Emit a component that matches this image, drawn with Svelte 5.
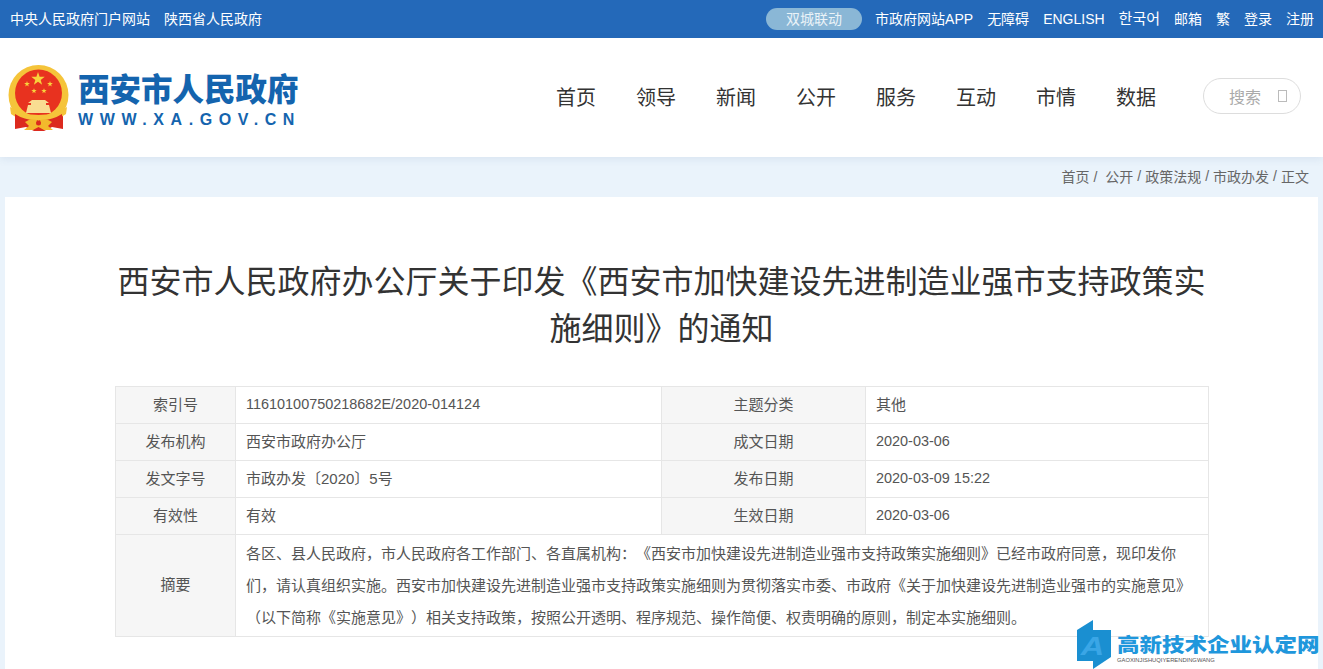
<script lang="ts">
  const topLeft = ['中央人民政府门户网站', '陕西省人民政府'];
  const topRight = ['市政府网站APP', '无障碍', 'ENGLISH', '한국어', '邮箱', '繁', '登录', '注册'];
  const nav = ['首页', '领导', '新闻', '公开', '服务', '互动', '市情', '数据'];
  const crumbs = ['公开', '政策法规', '市政办发', '正文'];

  const rows = [
    ['索引号', '11610100750218682E/2020-014124', '主题分类', '其他'],
    ['发布机构', '西安市政府办公厅', '成文日期', '2020-03-06'],
    ['发文字号', '市政办发〔2020〕5号', '发布日期', '2020-03-09 15:22'],
    ['有效性', '有效', '生效日期', '2020-03-06']
  ];

  const isNum = (s: string) => /^\d/.test(s);

  // five point star for the emblem
  function star(cx: number, cy: number, r: number) {
    const pts = [];
    for (let i = 0; i < 10; i++) {
      const len = i % 2 ? r * 0.4 : r;
      const a = (Math.PI / 5) * i - Math.PI / 2;
      pts.push(`${(cx + len * Math.cos(a)).toFixed(1)},${(cy + len * Math.sin(a)).toFixed(1)}`);
    }
    return pts.join(' ');
  }

  const stars = [
    [30, 14, 7],
    [19, 19, 3],
    [42, 19, 3],
    [26, 26, 2.8],
    [36, 26, 2.8]
  ];
</script>

<div class="page">
  <div class="topbar">
    <div class="top-links">
      {#each topLeft as item}
        <span>{item}</span>
      {/each}
    </div>
    <div class="top-links right">
      <span class="pill">双城联动</span>
      {#each topRight as item}
        <span class:ko={item === '한국어'}>{item}</span>
      {/each}
    </div>
  </div>

  <header class="header">
    <div class="logo">
      <svg class="emblem" viewBox="0 0 62 66" width="62" height="66" aria-hidden="true">
        <path d="M7 46 L7 64 L18 62 L26 66 H36 L44 62 L55 64 L55 46 Z" fill="#dc2a1e" />
        <circle cx="30.500" cy="30" r="30" fill="#f5c43a" />
        <circle cx="30.500" cy="28" r="23.500" fill="#e8321f" />
        {#each stars as s}
          <polygon points={star(s[0], s[1], s[2])} fill="#f8d23c" />
        {/each}
        <path d="M20 38 L24 35 H37 L41 38 H38 V40 H41 L43 48 H18 L20 40 H23 V38 Z" fill="#f9dd92" />
        <path d="M2 42 Q14 50 30.500 50 Q47 50 59 42 L58 49 Q46 58 30.500 58 Q15 58 3 49 Z" fill="#f5c43a" />
        <path d="M7 49 Q18 56 30 55 L30 60 Q16 60 7 54 Z" fill="#dc2a1e" />
        <path d="M54 49 Q43 56 31 55 L31 60 Q45 60 54 54 Z" fill="#dc2a1e" />
        <path d="M17 57 Q24 52 30.500 56 Q37 52 44 57 L40 61 L45 65 H36 L30.500 62 L25 65 H16 L21 61 Z" fill="#f2b92c" />
        <circle cx="30.500" cy="58" r="2.500" fill="#dc2a1e" />
      </svg>
      <div class="logo-text">
        <div class="logo-name">西安市人民政府</div>
        <div class="logo-url">WWW.XA.GOV.CN</div>
      </div>
    </div>

    <nav class="nav">
      {#each nav as item}
        <span>{item}</span>
      {/each}
    </nav>

    <div class="search">
      <span>搜索</span>
      <i class="search-box"></i>
    </div>
  </header>

  <div class="crumbs">
    <span class="first">首页 /</span>
    {#each crumbs as item, i}
      <span>{item}</span>
      {#if i < crumbs.length - 1}<span class="sep">/</span>{/if}
    {/each}
  </div>

  <main class="card">
    <h1>西安市人民政府办公厅关于印发《西安市加快建设先进制造业强市支持政策实施细则》的通知</h1>

    <table class="info">
      <colgroup>
        <col class="c1" />
        <col class="c2" />
        <col class="c3" />
        <col class="c4" />
      </colgroup>
      <tbody>
        {#each rows as row}
          <tr>
            <th>{row[0]}</th>
            <td class:num={isNum(row[1])}>{row[1]}</td>
            <th>{row[2]}</th>
            <td class:num={isNum(row[3])}>{row[3]}</td>
          </tr>
        {/each}
        <tr class="summary">
          <th>摘要</th>
          <td colspan="3">各区、县人民政府，市人民政府各工作部门、各直属机构：《西安市加快建设先进制造业强市支持政策实施细则》已经市政府同意，现印发你们，请认真组织实施。西安市加快建设先进制造业强市支持政策实施细则为贯彻落实市委、市政府《关于加快建设先进制造业强市的实施意见》（以下简称《实施意见》）相关支持政策，按照公开透明、程序规范、操作简便、权责明确的原则，制定本实施细则。</td>
        </tr>
      </tbody>
    </table>
  </main>

  <div class="mark">
    <svg viewBox="0 0 34 49" width="34" height="49" aria-hidden="true">
      <path d="M0 10 L16 0 V10 H34 V37 L16 49 V41 H0 Z" fill="#1a8fd1" />
    </svg>
    <span class="mark-a">A</span>
    <div class="mark-text">
      <div class="mark-name">高新技术企业认定网</div>
      <div class="mark-sub">GAOXINJISHUQIYERENDINGWANG</div>
    </div>
  </div>
</div>

<style>
  :global(body) {
    margin: 0;
    background: #eaf3fb;
  }

  .page {
    position: relative;
    width: 1323px;
    height: 669px;
    overflow: hidden;
    background: #eaf3fb;
    font-family: "Liberation Sans", "Noto Sans CJK SC", sans-serif;
    text-spacing-trim: space-all;
    color: #555;
  }

  .topbar {
    height: 38px;
    display: flex;
    justify-content: space-between;
    align-items: center;
    padding: 0 9px 0 10px;
    background: #2469b9;
    color: #fff;
    font-size: 14px;
  }

  .top-links {
    display: flex;
    align-items: center;
    gap: 14px;
    line-height: 22px;
  }

  .ko {
    font-size: 15px;
  }

  .pill {
    width: 96px;
    height: 22px;
    margin-right: -1px;
    text-align: center;
    border-radius: 11px;
    background: #8ab7d6;
    color: #eaf3f8;
  }

  .header {
    height: 116px;
    display: flex;
    align-items: center;
    padding: 0 22px 3px 8px;
    background: #fff;
    box-shadow: 0 2px 8px rgba(60, 100, 150, 0.1);
    position: relative;
  }

  .logo {
    display: flex;
    align-items: flex-start;
    gap: 8px;
    width: 548px;
    flex-shrink: 0;
    margin-top: 3px;
  }

  .emblem {
    flex-shrink: 0;
  }

  .logo-text {
    margin-top: 7px;
  }

  .logo-name {
    font-size: 31.500px;
    line-height: 36px;
    font-weight: 900;
    color: #1464ae;
    white-space: nowrap;
  }

  .logo-url {
    margin-top: 2px;
    font-size: 16px;
    line-height: 20px;
    font-weight: 700;
    letter-spacing: 6.600px;
    color: #1464ae;
    white-space: nowrap;
  }

  .nav {
    display: flex;
    gap: 40px;
    font-size: 20px;
    color: #333;
  }

  .search {
    margin-left: auto;
    width: 83px;
    height: 34px;
    display: flex;
    align-items: center;
    justify-content: flex-end;
    gap: 17px;
    padding-right: 13px;
    border: 1px solid #ddd;
    border-radius: 18px;
    font-size: 16px;
    color: #aaa;
  }

  .search-box {
    width: 7px;
    height: 10px;
    border: 1px solid #bbb;
  }

  .crumbs {
    height: 37px;
    padding-bottom: 3px;
    display: flex;
    align-items: center;
    justify-content: flex-end;
    gap: 4px;
    padding-right: 14px;
    font-size: 14px;
    color: #666;
  }

  .crumbs .first {
    margin-right: 4px;
  }

  .card {
    margin: 0 5px;
    padding: 62px 110px 33px;
    background: #fff;
  }

  h1 {
    margin: 0 0 33px;
    font-size: 32px;
    line-height: 47px;
    font-weight: 400;
    text-align: center;
    color: #333;
  }

  .info {
    width: 1093px;
    border-collapse: collapse;
    table-layout: fixed;
    font-size: 15px;
    color: #555;
  }

  .c1 {
    width: 120px;
  }

  .c2 {
    width: 426px;
  }

  .c3 {
    width: 204px;
  }

  .c4 {
    width: 343px;
  }

  .info th,
  .info td {
    height: 32px;
    padding: 0 10px 4px;
    border: 1px solid #e6e6e6;
    font-weight: 400;
  }

  .info th {
    text-align: center;
    background: #f6f6f6;
  }

  .info td {
    text-align: left;
  }

  .info td.num {
    height: 34px;
    font-size: 14.450px;
    padding-bottom: 2px;
  }

  .summary td {
    height: auto;
    line-height: 32px;
    padding: 3px 10px 2px;
  }

  .mark {
    position: absolute;
    left: 1077px;
    top: 620px;
    display: flex;
    align-items: flex-start;
  }

  .mark-a {
    position: absolute;
    left: 6px;
    top: 10px;
    font-size: 26px;
    line-height: 32px;
    font-weight: 700;
    font-style: italic;
    color: #3aa6e6;
    transform: scaleX(1.25);
  }

  .mark-text {
    margin: 15px 0 0 6px;
  }

  .mark-name {
    font-size: 22.500px;
    line-height: 21px;
    font-weight: 900;
    color: #1f97dc;
    white-space: nowrap;
    transform: scaleY(0.85);
  }

  .mark-sub {
    font-size: 5.800px;
    line-height: 8px;
    color: #555;
    white-space: nowrap;
  }
</style>
